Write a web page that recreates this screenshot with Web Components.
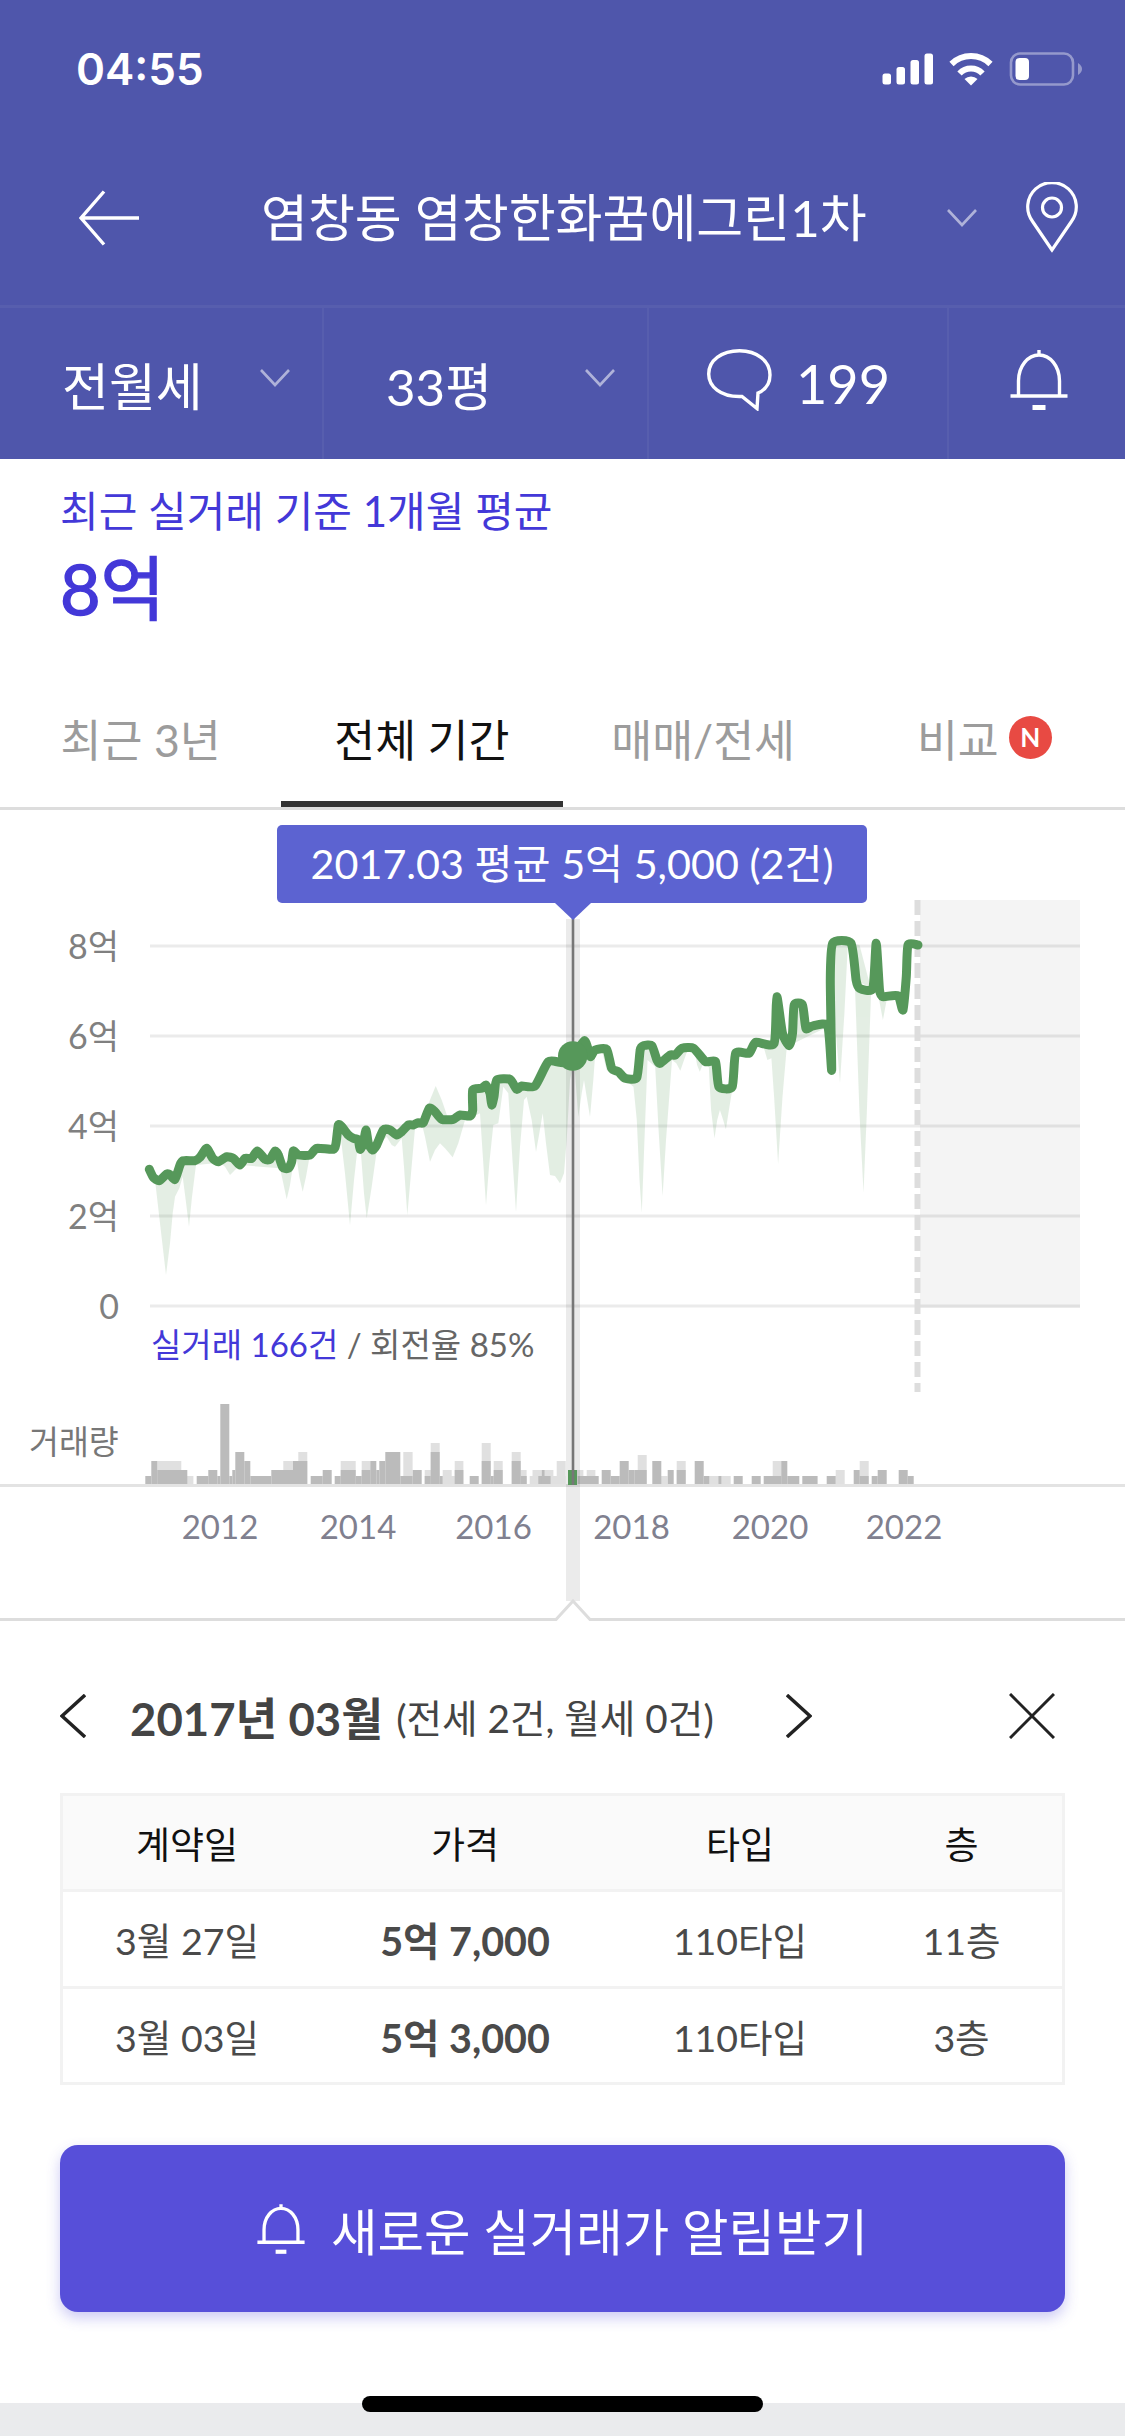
<!DOCTYPE html>
<html lang="ko">
<head>
<meta charset="utf-8">
<title>실거래가</title>
<style>
    html, body {
        margin: 0;
        padding: 0;
        background: white;
    }

    body {
        width: 1125px;
        height: 2436px;
        overflow: hidden;
        font-family: "Lato", "Noto Sans CJK KR", sans-serif;
        font-weight: 400;
        display: flex;
        flex-direction: column;
    }
</style>
</head>
<body>
    <app-header title-text="염창동 염창한화꿈에그린1차">
        <filter-cell slot="filters" caret>전월세</filter-cell>
        <filter-cell slot="filters" caret>33평</filter-cell>
        <comment-cell slot="filters" count="199"></comment-cell>
        <bell-cell slot="filters"></bell-cell>
    </app-header>
    <price-summary label="최근 실거래 기준 1개월 평균" price="8억"></price-summary>
    <tab-bar>
        <tab-item>최근 3년</tab-item>
        <tab-item active>전체 기간</tab-item>
        <tab-item>매매/전세</tab-item>
        <tab-item badge="N">비교</tab-item>
    </tab-bar>
    <price-chart></price-chart>
    <month-detail></month-detail>
    <home-bar></home-bar>

<script>
const BELL_PATH = "M8.5 46.5V32C8.5 17 18 6 29 6S49.5 17 49.5 32V46.5M0.5 47H57.5M29 1V6"

class AppHeader extends HTMLElement {
    constructor() {
        super()
        this.attachShadow({ mode: "open" })
    }

    connectedCallback() {
        const template = document.createElement("template")
        template.innerHTML =/*html*/ `
            <style>
                :host {
                    display: block;
                    height: 459px;
                    background: #4f56ab;
                    color: white;
                }

                #status {
                    height: 130px;
                    box-sizing: border-box;
                    padding: 43px 43px 0 76px;
                    display: flex;
                    justify-content: space-between;
                    align-items: flex-start;
                }

                #status svg {
                    margin-top: 9px;
                }

                #time {
                    font-family: "Inter", sans-serif;
                    font-weight: 600;
                    font-size: 44px;
                    line-height: 52px;
                }

                #title-row {
                    height: 175px;
                    display: flex;
                    align-items: center;
                    padding-left: 79px;
                    border-bottom: 3px solid #575eae;
                }

                #title {
                    margin-left: 122px;
                    width: 603px;
                    font-size: 51px;
                    line-height: 60px;
                    white-space: nowrap;
                }

                #filters {
                    display: grid;
                    grid-template-columns: 324px 325px 300px 176px;
                    height: 151px;
                }

                svg {
                    display: block;
                    flex: none;
                }
            </style>

            <div id="status">
                <span id="time">04:55</span>
                <svg width="200" height="36" viewBox="882 52 200 36">
                    <g fill="white">
                        <rect x="882.5" y="73.5" width="8.5" height="11" rx="2.5"></rect>
                        <rect x="896.5" y="67" width="8.5" height="17.5" rx="2.5"></rect>
                        <rect x="910.5" y="60" width="8.5" height="24.5" rx="2.5"></rect>
                        <rect x="924.5" y="53.5" width="8.5" height="31" rx="2.5"></rect>
                        <path d="M964.5 79A9.5 9.5 0 0 1 977.5 79L971 85.5Z"></path>
                    </g>
                    <g fill="none" stroke="white" stroke-width="6">
                        <path d="M951.5 64A28 28 0 0 1 990.5 64"></path>
                        <path d="M959.5 73.5A16 16 0 0 1 982.5 73.5"></path>
                    </g>
                    <rect x="1011" y="53.5" width="62" height="31" rx="9" fill="none" stroke="white" stroke-opacity=".4" stroke-width="2.6"></rect>
                    <rect x="1015.5" y="58" width="13.5" height="22" rx="4" fill="white"></rect>
                    <path d="M1078 63C1081 65 1082 67 1082 69S1081 73 1078 75Z" fill="white" fill-opacity=".4"></path>
                </svg>
            </div>
            <div id="title-row">
                <svg width="60" height="56" viewBox="0 0 60 56" fill="none" stroke="white" stroke-width="3.4">
                    <path d="M25 1.5L2 28L25 54.5M2 28H60"></path>
                </svg>
                <span id="title">${this.getAttribute("title-text")}</span>
                <svg style="margin-left:83px" width="30" height="18" viewBox="0 0 30 18" fill="none" stroke="white" stroke-opacity=".55" stroke-width="2.6">
                    <path d="M1 1L15 16L29 1"></path>
                </svg>
                <svg style="margin-left:48px" width="54" height="72" viewBox="0 0 54 72" fill="none" stroke="white" stroke-width="3.2">
                    <path d="M27 68L7.6 39.5A24.3 24.3 0 1 1 46.4 39.5Z" stroke-linejoin="miter"></path>
                    <circle cx="27" cy="25.5" r="9.5"></circle>
                </svg>
            </div>
            <div id="filters"><slot name="filters"></slot></div>
        `
        this.shadowRoot.appendChild(document.importNode(template.content, true))
    }
}

class FilterCell extends HTMLElement {
    constructor() {
        super()
        this.attachShadow({ mode: "open" })
    }

    connectedCallback() {
        const template = document.createElement("template")
        template.innerHTML =/*html*/ `
            <style>
                :host {
                    display: flex;
                    align-items: center;
                    justify-content: space-between;
                    padding: 0 32px 0 62px;
                    box-sizing: border-box;
                    border-right: 2px solid #575eae;
                    font-size: 51px;
                    height: 151px;
                }

                svg {
                    margin-bottom: 11px;
                }
            </style>
            <span><slot></slot></span>
            <svg width="30" height="18" viewBox="0 0 30 18" fill="none" stroke="white" stroke-opacity=".55" stroke-width="2.6">
                <path d="M1 1L15 16L29 1"></path>
            </svg>
        `
        this.shadowRoot.appendChild(document.importNode(template.content, true))
    }
}

class CommentCell extends HTMLElement {
    constructor() {
        super()
        this.attachShadow({ mode: "open" })
    }

    connectedCallback() {
        const template = document.createElement("template")
        template.innerHTML =/*html*/ `
            <style>
                :host {
                    display: flex;
                    align-items: center;
                    box-sizing: border-box;
                    padding: 0 0 0 58px;
                    border-right: 2px solid #575eae;
                    height: 151px;
                }

                svg {
                    margin-bottom: 7px;
                    flex: none;
                }

                span {
                    margin-left: 24px;
                    font-size: 54px;
                }
            </style>
            <svg width="65" height="62" viewBox="0 0 65 62" fill="none" stroke="white" stroke-width="3.4">
                <path d="M35 47.5C13 48.5 1.7 37 1.7 25C1.7 11 15 1.7 32.5 1.7S63 12 63 26C63 34 59 40.5 51 44L50 59.5Z"></path>
            </svg>
            <span>${this.getAttribute("count")}</span>
        `
        this.shadowRoot.appendChild(document.importNode(template.content, true))
    }
}

class BellCell extends HTMLElement {
    constructor() {
        super()
        this.attachShadow({ mode: "open" })
    }

    connectedCallback() {
        const template = document.createElement("template")
        template.innerHTML =/*html*/ `
            <style>
                :host {
                    display: flex;
                    align-items: center;
                    padding-left: 61px;
                    height: 151px;
                }

                svg {
                    margin-bottom: 7px;
                }
            </style>
            <svg width="58" height="62" viewBox="0 0 58 62" fill="none" stroke="white" stroke-width="3.4">
                <path d="${BELL_PATH}"></path>
                <rect x="22.5" y="56" width="13" height="5" fill="white" stroke="none"></rect>
            </svg>
        `
        this.shadowRoot.appendChild(document.importNode(template.content, true))
    }
}

class PriceSummary extends HTMLElement {
    constructor() {
        super()
        this.attachShadow({ mode: "open" })
    }

    connectedCallback() {
        const template = document.createElement("template")
        template.innerHTML =/*html*/ `
            <style>
                :host {
                    display: block;
                    height: 241px;
                    box-sizing: border-box;
                    padding: 29px 0 0 60px;
                    color: #4338d8;
                }

                #label {
                    font-size: 42px;
                    line-height: 46px;
                }

                #price {
                    margin-top: 12px;
                    font-size: 70px;
                    line-height: 84px;
                    -webkit-text-stroke: 1.4px #4338d8;
                }
            </style>
            <div id="label">${this.getAttribute("label")}</div>
            <div id="price">${this.getAttribute("price")}</div>
        `
        this.shadowRoot.appendChild(document.importNode(template.content, true))
    }
}

class TabBar extends HTMLElement {
    constructor() {
        super()
        this.attachShadow({ mode: "open" })
        this.shadowRoot.innerHTML =/*html*/ `
            <style>
                :host {
                    display: grid;
                    grid-template-columns: repeat(4, 281.25px);
                    height: 110px;
                    box-sizing: border-box;
                    border-bottom: 3px solid #dddddd;
                }
            </style>
            <slot></slot>
        `
    }
}

class TabItem extends HTMLElement {
    constructor() {
        super()
        this.attachShadow({ mode: "open" })
    }

    connectedCallback() {
        const active = this.hasAttribute("active")
        const badge = this.getAttribute("badge")
        const template = document.createElement("template")
        template.innerHTML =/*html*/ `
            <style>
                :host {
                    display: flex;
                    align-items: center;
                    justify-content: center;
                    gap: 10px;
                    height: 107px;
                    box-sizing: border-box;
                    padding-bottom: 27px;
                    font-size: 44.5px;
                    color: ${active ? "#111111" : "#9c9c9c"};
                    border-bottom: 6px solid ${active ? "#333333" : "transparent"};
                }

                #badge {
                    width: 43px;
                    height: 43px;
                    border-radius: 50%;
                    background: #e84a43;
                    color: white;
                    font-size: 26px;
                    font-weight: 700;
                    line-height: 43px;
                    text-align: center;
                }
            </style>
            <span><slot></slot></span>
            ${badge ? `<span id="badge">${badge}</span>` : ""}
        `
        this.shadowRoot.appendChild(document.importNode(template.content, true))
    }
}

// Traced from the chart, left part is at 3x from (120,880), right part at 2.987x from (600,880)
const left = points => points.map(([x, y]) => [120 + x / 3, 880 + y / 3])
const right = points => points.map(([x, y]) => [600 + x / 2.987, 880 + y / 3])

const LINE = [
    ...left([[88,868],[100,892],[118,902],[140,882],[150,884],[165,898],[180,855],[190,842],[225,842],[240,832],[260,805],[278,835],[295,845],[320,830],[340,835],[360,855],[375,835],[395,835],[412,813],[435,838],[450,838],[465,813],[475,825],[488,862],[505,865],[515,845],[520,813],[535,825],[570,825],[590,805],[640,808],[648,790],[655,735],[665,740],[685,765],[700,775],[715,780],[720,808],[730,790],[738,750],[745,790],[757,810],[770,795],[790,750],[810,750],[830,765],[845,755],[865,735],[880,735],[895,728],[910,728],[928,685],[945,695],[965,718],[1000,718],[1020,705],[1050,708],[1058,690],[1058,630],[1085,625],[1098,615],[1110,640],[1115,675],[1122,650],[1130,600],[1170,598],[1190,628],[1205,618],[1245,618],[1285,545],[1330,548],[1360,528],[1393,482],[1405,510],[1412,530],[1425,510],[1460,508],[1475,565]]),
    ...right([[55,575],[75,595],[110,593],[120,510],[130,497],[155,497],[170,540],[180,550],[210,525],[225,525],[245,505],[280,505],[315,545],[345,545],[355,620],[395,620],[405,520],[445,520],[465,487],[520,490],[528,350],[545,460],[565,497],[575,460],[580,375],[605,375],[615,445],[635,438],[680,438],[692,570],[688,300],[695,190],[750,190],[765,300],[775,325],[815,325],[825,190],[835,330],[845,350],[890,347],[905,390],[915,290],[920,195],[950,195]])
]

const LOWS = [
    ...left([[88,868],[105,900],[120,1030],[138,1185],[150,1090],[158,1000],[165,950],[178,925],[188,890],[197,960],[207,1040],[216,950],[228,855],[300,848],[315,860],[330,885],[345,870],[360,855],[480,865],[490,910],[500,958],[510,915],[518,862],[530,835],[538,890],[548,935],[558,890],[568,835],[650,790],[662,770],[675,880],[690,1035],[702,900],[712,810],[722,810],[732,940],[740,1015],[755,920],[772,800],[800,770],[815,795],[825,800],[845,775],[852,860],[862,1005],[873,880],[885,745],[905,730],[915,770],[930,845],[945,810],[960,790],[975,805],[998,832],[1015,790],[1035,720],[1080,700],[1090,850],[1098,975],[1108,850],[1120,735],[1135,730],[1150,620],[1165,640],[1178,850],[1188,995],[1200,800],[1212,660],[1220,650],[1235,720],[1248,815],[1258,760],[1268,700],[1278,790],[1290,885],[1305,888],[1320,910],[1332,880],[1340,780],[1350,600],[1362,540],[1375,710],[1385,640],[1392,600],[1400,650],[1410,710],[1420,600],[1425,530],[1445,510],[1460,570]]),
    ...right([[60,585],[75,600],[100,620],[110,720],[118,900],[125,998],[132,800],[142,540],[165,560],[175,750],[187,948],[197,780],[215,540],[228,550],[240,572],[258,520],[280,495],[290,555],[298,575],[310,545],[325,560],[332,690],[342,775],[350,720],[358,690],[368,720],[376,748],[385,690],[395,630],[410,520],[470,490],[490,505],[500,540],[512,535],[520,650],[532,852],[545,650],[558,500],[680,440],[700,400],[717,608],[730,400],[740,200],[762,330],[775,700],[787,938],[797,700],[810,325],[830,340],[845,420],[860,340],[890,347],[905,390],[920,200]])
]

const HIGHS = [
    left([[905,730],[930,660],[947,618],[965,660],[985,718]]),
    left([[1375,490],[1392,470],[1410,510]]),
    right([[750,190],[775,195],[800,290],[810,325],[765,300]])
]

// [from, to, height] at 3x, x counted from 140 and 530
const bar = (offset, items) => items.map(([a, b, h]) => [offset + a / 3, (b - a) / 3, h])
const H = { 1: 9, 2: 15, 3: 24, 4: 33, 5: 42, 6: 30, 9: 81 }

const LIGHT_BARS = [
    ...bar(140, [[52,124,3],[134,160,1],[430,459,3],[475,502,4],[602,647,3],[665,691,3],[790,818,4],[854,880,2],[872,899,5],[908,935,2],[908,952,1],[944,970,3],[1025,1052,5],[1061,1088,3],[1115,1142,4],[1132,1160,2],[1169,1196,1],[1178,1200,2]]),
    ...bar(530, [[0,25,1],[8,35,2],[44,70,2],[62,107,1],[80,107,3],[134,160,2],[170,196,2],[323,350,6],[385,413,1],[440,467,3],[538,565,1],[575,602,1],[728,755,3],[917,944,2],[989,1016,3]])
]

const DARK_BARS = [
    ...bar(140, [[16,34,1],[34,52,3],[52,142,2],[170,205,1],[205,232,2],[232,241,1],[241,268,9],[268,277,1],[277,286,2],[286,313,4],[313,331,3],[331,394,1],[394,459,2],[459,502,3],[512,548,1],[548,575,2],[584,602,1],[602,647,2],[647,665,1],[665,691,2],[691,709,3],[709,718,2],[718,736,3],[736,781,4],[781,818,1],[818,845,2],[854,872,1],[872,899,4],[899,908,1],[944,970,2],[989,1016,1],[1025,1052,3],[1052,1061,1],[1061,1088,2],[1115,1142,3],[1142,1160,1]]),
    ...bar(530, [[25,62,1],[35,44,2],[143,206,1],[215,242,2],[242,269,1],[269,296,3],[296,314,2],[314,350,2],[367,394,3],[413,431,2],[440,467,2],[494,521,3],[521,538,1],[565,575,1],[611,638,1],[665,692,1],[701,754,1],[754,772,3],[772,808,1],[817,863,1],[890,917,1],[971,989,2],[989,1016,1],[1025,1043,1],[1043,1070,2],[1106,1133,2],[1133,1151,1]])
]

const toPolygon = points => points.map(p => p[0].toFixed(1) + "," + p[1].toFixed(1)).join(" ")

function toCurve(points) {
    // Catmull-Rom with a low tension, keeps the peaks from overshooting
    const t = 0.1
    let d = `M${points[0][0].toFixed(1)} ${points[0][1].toFixed(1)}`
    for (let i = 0; i < points.length - 1; i++) {
        const p0 = points[i - 1] || points[i]
        const p1 = points[i]
        const p2 = points[i + 1]
        const p3 = points[i + 2] || p2
        const c1x = p1[0] + (p2[0] - p0[0]) * t
        const c1y = p1[1] + (p2[1] - p0[1]) * t
        const c2x = p2[0] - (p3[0] - p1[0]) * t
        const c2y = p2[1] - (p3[1] - p1[1]) * t
        d += `C${c1x.toFixed(1)} ${c1y.toFixed(1)} ${c2x.toFixed(1)} ${c2y.toFixed(1)} ${p2[0].toFixed(1)} ${p2[1].toFixed(1)}`
    }
    return d
}

const drawBars = (bars, color) => bars
    .map(([x, w, h]) => `<rect x="${x.toFixed(1)}" y="${1485 - H[h]}" width="${w.toFixed(1)}" height="${H[h]}" fill="${color}"></rect>`)
    .join("")

class PriceChart extends HTMLElement {
    constructor() {
        super()
        this.attachShadow({ mode: "open" })
    }

    connectedCallback() {
        const gridRows = [946, 1036, 1126, 1216, 1306]
        const yLabels = [["8억", 946], ["6억", 1036], ["4억", 1126], ["2억", 1216], ["0", 1306]]
        const years = [[2012, 220], [2014, 358], [2016, 493.5], [2018, 631.5], [2020, 770], [2022, 904]]

        const template = document.createElement("template")
        template.innerHTML =/*html*/ `
            <style>
                :host {
                    display: block;
                    position: relative;
                    height: 811px;
                }

                svg {
                    position: absolute;
                    left: 0;
                    top: 0;
                }

                .y-label, .year, #volume, #count {
                    position: absolute;
                    line-height: 40px;
                    white-space: nowrap;
                }

                .y-label {
                    right: 1006px;
                    font-size: 34px;
                    color: #808080;
                    transform: translateY(-50%);
                }

                .year {
                    font-size: 33px;
                    color: #80808f;
                    transform: translate(-50%, -50%);
                    margin-top: -1px;
                }

                #volume {
                    left: 29px;
                    top: 612px;
                    font-size: 32.5px;
                    color: #777777;
                }

                #count {
                    left: 151px;
                    top: 514px;
                    font-size: 33px;
                    color: #666666;
                }

                #count b {
                    font-weight: 400;
                    color: #4338d8;
                }

                #tooltip {
                    position: absolute;
                    left: 277px;
                    top: 15px;
                    width: 590px;
                    height: 78px;
                    background: #5c63d1;
                    border-radius: 5px;
                    color: white;
                    font-size: 41.3px;
                    line-height: 76px;
                    text-align: center;
                    white-space: nowrap;
                }
            </style>

            <svg width="1125" height="812" viewBox="0 810 1125 812">
                <rect x="920" y="900" width="160" height="408" fill="#f4f4f4"></rect>
                ${gridRows.map(y => `<rect x="150" y="${y - 1.5}" width="930" height="3" fill="#000" fill-opacity=".08"></rect>`).join("")}
                <g fill="#56985a" opacity=".16">
                    <polygon points="${toPolygon([...LINE, ...LOWS.slice().reverse()])}"></polygon>
                    ${HIGHS.map(points => `<polygon points="${toPolygon(points)}"></polygon>`).join("")}
                </g>
                <line x1="917.5" y1="900" x2="917.5" y2="1392" stroke="#dddddd" stroke-width="6" stroke-dasharray="15 6"></line>
                ${drawBars(LIGHT_BARS, "#e0e0e0")}
                ${drawBars(DARK_BARS, "#bbbbbb")}
                <rect x="0" y="1484" width="1125" height="3" fill="#e3e3e3"></rect>
                <rect x="566" y="919" width="14" height="682" fill="#000" fill-opacity=".08"></rect>
                <rect x="568" y="1470" width="9" height="15" fill="#56985a"></rect>
                <line x1="573" y1="915" x2="573" y2="1485" stroke="#777777" stroke-width="2.6"></line>
                <path d="${toCurve(LINE)}" fill="none" stroke="#56985a" stroke-width="9" stroke-linecap="round" stroke-linejoin="round"></path>
                <circle cx="572.7" cy="1056" r="14.7" fill="#56985a"></circle>
                <path d="M555 903H591L573 920Z" fill="#5c63d1"></path>
                <path d="M0 1619.5H556L573 1601L590 1619.5H1125" fill="white" stroke="#dddddd" stroke-width="3"></path>
            </svg>
            ${yLabels.map(([text, y]) => `<span class="y-label" style="top:${y - 810}px">${text}</span>`).join("")}
            ${years.map(([text, x]) => `<span class="year" style="left:${x}px;top:${1527 - 810}px">${text}</span>`).join("")}
            <span id="count"><b>실거래 166건</b> / 회전율 85%</span>
            <span id="volume">거래량</span>
            <div id="tooltip">2017.03 평균 5억 5,000 (2건)</div>
        `
        this.shadowRoot.appendChild(document.importNode(template.content, true))
    }
}

class MonthDetail extends HTMLElement {
    constructor() {
        super()
        this.attachShadow({ mode: "open" })
    }

    connectedCallback() {
        const template = document.createElement("template")
        template.innerHTML =/*html*/ `
            <style>
                :host {
                    display: block;
                    height: 782px;
                    box-sizing: border-box;
                    padding: 63px 60px 0;
                }

                #nav {
                    display: flex;
                    align-items: center;
                    height: 64px;
                    color: #444444;
                    white-space: nowrap;
                }

                #month {
                    margin-left: 44px;
                    font-size: 45.5px;
                    font-weight: 700;
                }

                #counts {
                    margin-left: 13px;
                    font-size: 38.7px;
                }

                #next {
                    margin-left: 72px;
                }

                #close {
                    margin-left: auto;
                    margin-right: 10px;
                }

                svg {
                    flex: none;
                    display: block;
                }
            </style>

            <div id="nav">
                <svg width="26" height="44" viewBox="0 0 26 44" fill="none" stroke="#222" stroke-width="3.4">
                    <path d="M25 1L2 22L25 43"></path>
                </svg>
                <span id="month">2017년 03월</span>
                <span id="counts">(전세 2건, 월세 0건)</span>
                <svg id="next" width="26" height="44" viewBox="0 0 26 44" fill="none" stroke="#222" stroke-width="3.4">
                    <path d="M1 1L24 22L1 43"></path>
                </svg>
                <svg id="close" width="46" height="46" viewBox="0 0 46 46" fill="none" stroke="#222" stroke-width="3">
                    <path d="M1 1L45 45M45 1L1 45"></path>
                </svg>
            </div>
            <deal-table></deal-table>
            <alert-button>새로운 실거래가 알림받기</alert-button>
        `
        this.shadowRoot.appendChild(document.importNode(template.content, true))
    }
}

class DealTable extends HTMLElement {
    constructor() {
        super()
        this.attachShadow({ mode: "open" })
    }

    connectedCallback() {
        const rows = [
            ["3월 27일", "5억 7,000", "110타입", "11층"],
            ["3월 03일", "5억 3,000", "110타입", "3층"]
        ]
        const template = document.createElement("template")
        template.innerHTML =/*html*/ `
            <style>
                :host {
                    display: block;
                    margin-top: 45px;
                    border: 3px solid #f2f2f2;
                    font-size: 37.5px;
                    color: #4a4a4a;
                }

                .row {
                    display: grid;
                    grid-template-columns: 248px 308px 242px 1fr;
                    height: 93.5px;
                    align-items: center;
                    text-align: center;
                    border-top: 3px solid #f2f2f2;
                }

                .head {
                    border-top: 0;
                    height: 93px;
                    background: #fafafa;
                    color: #111111;
                    font-size: 37px;
                }

                .price {
                    font-weight: 700;
                    font-size: 39.5px;
                }
            </style>

            <div class="row head">
                <span>계약일</span><span>가격</span><span>타입</span><span>층</span>
            </div>
            ${rows.map(([date, price, type, floor]) => `
                <div class="row">
                    <span>${date}</span><span class="price">${price}</span><span>${type}</span><span>${floor}</span>
                </div>
            `).join("")}
        `
        this.shadowRoot.appendChild(document.importNode(template.content, true))
    }
}

class AlertButton extends HTMLElement {
    constructor() {
        super()
        this.attachShadow({ mode: "open" })
    }

    connectedCallback() {
        const template = document.createElement("template")
        template.innerHTML =/*html*/ `
            <style>
                :host {
                    display: flex;
                    align-items: center;
                    justify-content: center;
                    gap: 26px;
                    margin-top: 60px;
                    height: 167px;
                    border-radius: 18px;
                    background: #574fd9;
                    color: white;
                    font-size: 50.5px;
                    box-shadow: 0 6px 14px rgba(87, 79, 217, .3);
                }

                svg {
                    display: block;
                }
            </style>
            <svg width="48" height="52" viewBox="0 0 58 62" fill="none" stroke="white" stroke-width="4">
                <path d="${BELL_PATH}"></path>
                <rect x="22.5" y="56" width="13" height="5" fill="white" stroke="none"></rect>
            </svg>
            <span><slot></slot></span>
        `
        this.shadowRoot.appendChild(document.importNode(template.content, true))
    }
}

class HomeBar extends HTMLElement {
    constructor() {
        super()
        this.attachShadow({ mode: "open" })
        this.shadowRoot.innerHTML =/*html*/ `
            <style>
                :host {
                    display: block;
                    position: relative;
                    height: 33px;
                    background: #eaebed;
                }

                #pill {
                    position: absolute;
                    left: 362px;
                    top: -7px;
                    width: 401px;
                    height: 16px;
                    border-radius: 8px;
                    background: black;
                }
            </style>
            <div id="pill"></div>
        `
    }
}

// Register elements
customElements.define("app-header", AppHeader)
customElements.define("filter-cell", FilterCell)
customElements.define("comment-cell", CommentCell)
customElements.define("bell-cell", BellCell)
customElements.define("price-summary", PriceSummary)
customElements.define("tab-bar", TabBar)
customElements.define("tab-item", TabItem)
customElements.define("price-chart", PriceChart)
customElements.define("month-detail", MonthDetail)
customElements.define("deal-table", DealTable)
customElements.define("alert-button", AlertButton)
customElements.define("home-bar", HomeBar)
</script>
</body>
</html>
